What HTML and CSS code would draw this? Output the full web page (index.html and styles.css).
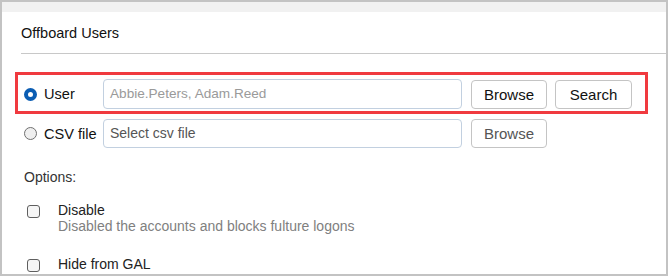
FILE: index.html
```html
<!DOCTYPE html>
<html>
<head>
<meta charset="utf-8">
<link rel="stylesheet" href="styles.css">
</head>
<body>
<div class="frame">
  <div class="topband"></div>
  <div class="header">Offboard Users</div>
  <div class="choice-row highlight">
    <label class="choice"><span class="radio checked"></span><span>User</span></label>
    <div class="field placeholder-light">Abbie.Peters, Adam.Reed</div>
    <button class="btn">Browse</button>
    <button class="btn">Search</button>
  </div>
  <div class="choice-row second">
    <label class="choice"><span class="radio"></span><span>CSV file</span></label>
    <div class="field placeholder-dark">Select csv file</div>
    <button class="btn muted">Browse</button>
  </div>
  <div class="options-label">Options:</div>
  <div class="option">
    <span class="checkbox"></span>
    <div class="option-text">
      <div class="option-title">Disable</div>
      <div class="option-desc">Disabled the accounts and blocks fulture logons</div>
    </div>
  </div>
  <div class="option last">
    <span class="checkbox"></span>
    <div class="option-text">
      <div class="option-title">Hide from GAL</div>
    </div>
  </div>
</div>
</body>
</html>
```
FILE: styles.css
```css
* { box-sizing: border-box; }
html, body { margin: 0; padding: 0; background: #fff; }
body { font-family: "Liberation Sans", Arial, sans-serif; font-size: 14px; color: #111; }
.frame {
  width: 668px;
  height: 276px;
  border: 2px solid #c3c3c3;
  background: #fff;
  overflow: hidden;
}
.topband { height: 10px; background: #f1f1f1; }
.header {
  margin-left: 19px;
  padding: 13px 0 12px;
  line-height: 16px;
  font-size: 14.5px;
  border-bottom: 1px solid #c8c8c8;
  color: #111;
}
.choice-row {
  display: flex;
  align-items: center;
  margin-left: 13px;
  width: 633px;
  border: 3px solid transparent;
  padding: 4px 0 2px 6px;
}
.choice-row.highlight { margin-top: 18px; border-color: #f03a3f; }
.choice-row.second { padding-top: 2px; }
.choice {
  width: 79px;
  display: flex;
  align-items: center;
  gap: 7px;
  font-size: 14.6px;
  color: #111;
}
.radio {
  width: 13px;
  height: 13px;
  border-radius: 50%;
  border: 1px solid #6f6f6f;
  background: #efefef;
  flex: none;
}
.radio.checked { border: 4px solid #0b5db3; background: #fff; }
.field {
  width: 359px;
  height: 30px;
  border: 1px solid #c2d0e0;
  border-radius: 4px;
  padding-left: 6px;
  line-height: 28px;
  white-space: nowrap;
}
.placeholder-light { color: #9a9a9a; font-size: 13.6px; }
.placeholder-dark { color: #555; height: 29px; line-height: 27px; }
.btn {
  height: 29px;
  margin-left: 9px;
  width: 76px;
  border: 1px solid #c4c4c4;
  border-radius: 4px;
  background: #fff;
  font-family: inherit;
  font-size: 15px;
  color: #111;
  padding: 0;
}
.btn + .btn { margin-left: 8px; width: 77px; }
.btn.muted { color: #555; }
.options-label {
  margin-top: 16px;
  padding-left: 22px;
  line-height: 16px;
  color: #333;
}
.option {
  display: flex;
  align-items: flex-start;
  padding-left: 25px;
  margin-top: 17px;
}
.option.last { margin-top: 22px; }
.checkbox {
  width: 13px;
  height: 13px;
  margin-top: 3px;
  border: 1px solid #5f5f5f;
  border-radius: 3px;
  background: #f6f6f6;
  flex: none;
}
.option-text { margin-left: 18px; line-height: 16px; }
.option-title { color: #222; }
.option-desc { color: #808080; }
```
